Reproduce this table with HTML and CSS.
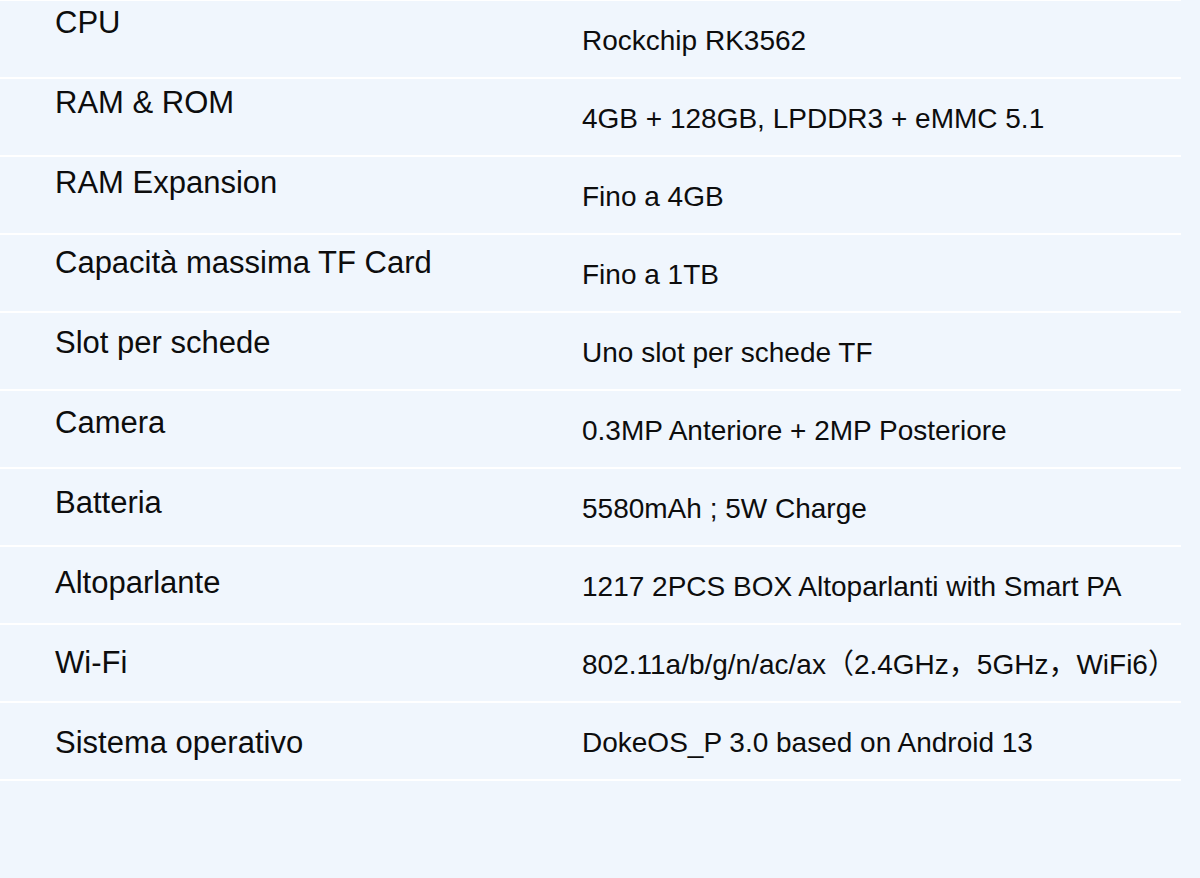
FILE: index.html
```html
<!DOCTYPE html>
<html lang="it">
<head>
<meta charset="utf-8">
<title>Specifiche</title>
<link rel="stylesheet" href="styles.css">
</head>
<body>
<section class="spec">
  <div class="rows">
    <div class="row">Rockchip RK3562</div>
    <div class="row">4GB + 128GB, LPDDR3 + eMMC 5.1</div>
    <div class="row">Fino a 4GB</div>
    <div class="row">Fino a 1TB</div>
    <div class="row">Uno slot per schede TF</div>
    <div class="row">0.3MP Anteriore + 2MP Posteriore</div>
    <div class="row">5580mAh ; 5W Charge</div>
    <div class="row">1217 2PCS BOX Altoparlanti with Smart PA</div>
    <div class="row">802.11a/b/g/n/ac/ax（2.4GHz，5GHz，WiFi6）</div>
    <div class="row">DokeOS_P 3.0 based on Android 13</div>
  </div>
  <ul class="labels">
    <li>CPU</li>
    <li>RAM &amp; ROM</li>
    <li>RAM Expansion</li>
    <li>Capacità massima TF Card</li>
    <li>Slot per schede</li>
    <li>Camera</li>
    <li>Batteria</li>
    <li>Altoparlante</li>
    <li>Wi-Fi</li>
    <li>Sistema operativo</li>
  </ul>
</section>
</body>
</html>
```

FILE: styles.css
```css
html, body {
  margin: 0;
  padding: 0;
  background: #f0f6fd;
}

body {
  font-family: "Liberation Sans", Arial, "Noto Sans CJK SC", sans-serif;
  color: #0d0d0d;
}

.spec {
  display: grid;
  width: 1181px;
  margin-top: -1px;
}

.rows,
.labels {
  grid-area: 1 / 1;
}

.rows {
  border-top: 2px solid #fff;
}

.row {
  box-sizing: border-box;
  height: 78px;
  border-bottom: 2px solid #fff;
  padding: 24px 0 0 582px;
  font-size: 28px;
  line-height: 32px;
  white-space: nowrap;
}

.labels {
  list-style: none;
  margin: 0;
  padding: 6px 0 0 55px;
}

.labels li {
  height: 80px;
  font-size: 31px;
  line-height: 36px;
  white-space: nowrap;
}
```
